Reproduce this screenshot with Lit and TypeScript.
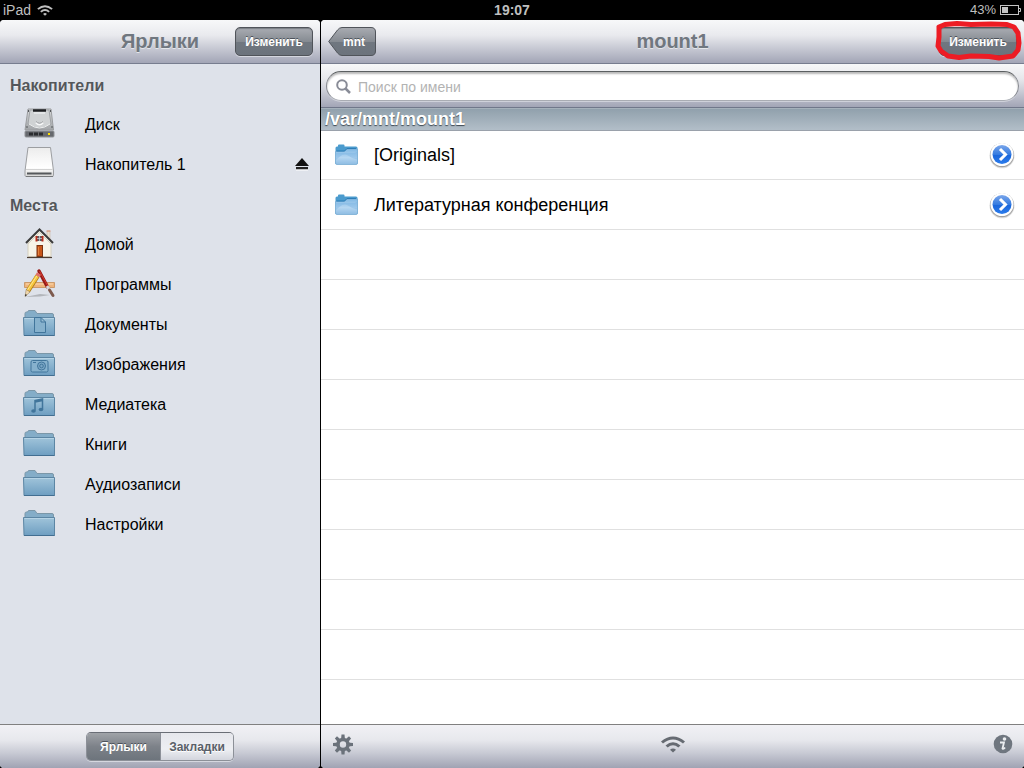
import { LitElement, html, svg, css } from "lit";
import { customElement, state } from "lit/decorators.js";

const folderShape = svg`
  <path d="M3 9V5.500Q3 4 4.500 4H5.500L6.500 2.500H13L15 5.500H30Q31.500 5.500 31.500 7V10H3Z" fill="#84adc8" stroke="#7b97a8"/>
  <path d="M1.500 9.500H32.500V27.500H2Z" fill="url(#fold)" stroke="#5c86a4"/>
  <path d="M2.500 10.500H32" stroke="#b5d3e5"/>
  <path d="M2 27.500H32.500" stroke="#426e91"/>`;

const glyphs: Record<string, unknown> = {
  disk: svg`<g transform="translate(0 -2)">
    <path d="M6 3H29L31.500 24H3Z" fill="url(#metal)" stroke="#9a9c9f"/>
    <path d="M8 4H27L29 18Q17.500 26 6 18Z" fill="#cfd2d3" stroke="#a0a3a6"/>
    <path d="M11 4.500H24" stroke="#1d1e20" stroke-width="2.500"/>
    <path d="M12 7H23" stroke="#e9ebec" stroke-width="1.500"/>
    <path d="M7 18Q17.500 26 28 18" fill="none" stroke="#eef0f0"/>
    <path d="M14 16.500Q17.500 20.500 21 16.500" fill="none" stroke="#f7f8f8" stroke-width="2"/>
    <path d="M14 15.500Q17.500 19 21 15.500" fill="none" stroke="#9a9da0"/>
    <path d="M6 5h1M28 5h1M4.500 21h1M29.500 21h1" stroke="#55585c" stroke-width="2"/>
    <rect x="3" y="25" width="29" height="6" rx="1" fill="#66696e" stroke="#909397"/>
    <path d="M7 28H22" stroke="#2a2c30" stroke-width="3" stroke-dasharray="4 1"/>
    <rect x="26" y="27" width="2" height="2" fill="#ffe100"/>
  </g>`,
  removable: svg`<g transform="translate(0 -2)">
    <path d="M6 1.500H28.500L31.500 25V29.500Q31.500 30.500 30 30.500H4.500Q3 30.500 3 29.500V25Z" fill="url(#paper)" stroke="#9c9ea1"/>
    <path d="M4 23.500H30.500" stroke="#d2d2d2"/>
    <path d="M5 27.500H29.500" stroke="#55585b" stroke-width="2"/>
    <path d="M4 30.500H31" stroke="#77797b"/>
  </g>`,
  home: svg`<g transform="translate(0 -1)">
    <path d="M25 4h3v9h-3z" fill="#e9dccb" stroke="#c9b8a4" stroke-width=".6"/>
    <path d="M24.500 4h4" stroke="#d98a6c"/>
    <path d="M6 14L17.500 3L29 14V29.500H6Z" fill="#f7f4e8" stroke="#d5cfbe"/>
    <path d="M4 16L17.500 2.500L31 16" fill="none" stroke="#3b3b3b" stroke-width="2"/>
    <path d="M6 17L17.500 5.500L29 17" fill="none" stroke="#cfcaba" stroke-width=".8"/>
    <rect x="14.500" y="9" width="6" height="5" fill="#5b5e66"/>
    <path d="M14.500 9v5.500M20.500 9v5.500" stroke="#b82c1a" stroke-width="2"/>
    <path d="M17.500 9v5M15 11.500h5" stroke="#d8d8d8" stroke-width=".7"/>
    <rect x="15" y="18.500" width="5.500" height="11" fill="#c85618" stroke="#7b3310"/>
    <path d="M16.500 20v8" stroke="#e4823d"/>
    <path d="M5 30.500H30" stroke="#4b3d32" stroke-width="1.200"/>
  </g>`,
  apps: svg`<g transform="translate(0 -1)">
    <path d="M3 30L18 27L28 28L18 29.500Z" fill="#b3b6bb"/>
    <path d="M2.500 15.500H32.500V20.500H2.500Z" fill="#efb57c" stroke="#c48d58" stroke-width=".8"/>
    <path d="M4 17H31" stroke="#fbd9b0"/>
    <path d="M17 4L25.500 20" stroke="#951a17" stroke-width="3.500" stroke-linecap="round"/>
    <path d="M17.500 4L25.500 18.500" stroke="#d63a2e" stroke-width="1"/>
    <path d="M25 19L28 23.500" stroke="#d5d6d8" stroke-width="3"/>
    <path d="M27.500 23L31 28.500" stroke="#7d5a4d" stroke-width="3" stroke-linecap="round"/>
    <path d="M15.500 9L6 24" stroke="#a87719" stroke-width="4.600"/>
    <path d="M15.300 9L6 23.500" stroke="#f6c53c" stroke-width="3.400"/>
    <path d="M14.800 9L5.500 23" stroke="#fde58e"/>
    <path d="M17 6.500L15.500 9" stroke="#df6f69" stroke-width="4.600"/>
    <path d="M4.200 22.500L8 25L3 29.500Z" fill="#f0d8af" stroke="#8e7448" stroke-width=".5"/>
    <path d="M3 29.500L3.500 27L5 28Z" fill="#222"/>
  </g>`,
  documents: svg`${folderShape}
    <path d="M12.500 9.500H19L23.500 14V24.500H12.500Z M19 9.500V14H23.500" fill="#86b1cd" stroke="#41759b"/>`,
  pictures: svg`${folderShape}
    <rect x="9" y="12.500" width="17" height="11.500" rx="1.500" fill="#86b1cd" stroke="#41759b"/>
    <circle cx="19.500" cy="18" r="4" fill="#79a6c5" stroke="#41759b"/>
    <circle cx="19.500" cy="18" r="1.800" fill="none" stroke="#41759b"/>
    <path d="M11 14.500h3" stroke="#41759b"/>`,
  media: svg`${folderShape}
    <path d="M13 22.500V12.500L20.500 11V21M13 14L20.500 12.500" fill="none" stroke="#41759b" stroke-width="1.500"/>
    <ellipse cx="11.500" cy="23" rx="2.300" ry="1.800" fill="#41759b"/>
    <ellipse cx="19" cy="21.500" rx="2.300" ry="1.800" fill="#41759b"/>`,
  folder: folderShape,
};

interface Place {
  name: string;
  icon: string;
  ejectable?: boolean;
}

interface Group {
  title: string;
  places: Place[];
}

const groups: Group[] = [
  {
    title: "Накопители",
    places: [
      { name: "Диск", icon: "disk" },
      { name: "Накопитель 1", icon: "removable", ejectable: true },
    ],
  },
  {
    title: "Места",
    places: [
      { name: "Домой", icon: "home" },
      { name: "Программы", icon: "apps" },
      { name: "Документы", icon: "documents" },
      { name: "Изображения", icon: "pictures" },
      { name: "Медиатека", icon: "media" },
      { name: "Книги", icon: "folder" },
      { name: "Аудиозаписи", icon: "folder" },
      { name: "Настройки", icon: "folder" },
    ],
  },
];

const wifi = (size: number, color: string) => html`
  <svg width=${size} height=${Math.round(size * 0.7)} viewBox="0 0 24 17" fill=${color}>
    <path d="M0 5.500Q12-4.500 24 5.500L22 7.500Q12 -.5 2 7.500Z"/>
    <path d="M4.500 9.500Q12 3 19.500 9.500L17.300 11.500Q12 7 6.700 11.500Z"/>
    <path d="M9 13.800Q12 11.300 15 13.800L12 16.500Z"/>
  </svg>`;

const chrome = css`
  :host {
    font-family: "Liberation Sans", Arial, sans-serif;
  }
  * {
    box-sizing: border-box;
  }
  button {
    font: inherit;
    cursor: pointer;
  }
  ul {
    list-style: none;
    margin: 0;
    padding: 0;
  }
  svg {
    display: block;
    flex: none;
  }
  .bar {
    flex: none;
    height: 44px;
    padding: 0 7px;
  }
  .top {
    display: grid;
    grid-template-columns: 1fr auto 1fr;
    align-items: center;
    background: linear-gradient(#f7f8f9, #e9eaee 35%, #c8cad4 65%, #a2a5b6);
    border-bottom: 1px solid #777d8f;
  }
  .bottom {
    background: linear-gradient(#f1f1f5, #e7e8ed 35%, #c8cad4 65%, #a0a3b3);
    border-top: 1px solid #808080;
  }
  h1 {
    grid-column: 2;
    margin: 0;
    padding-bottom: 2px;
    font-size: 20px;
    line-height: 24px;
    color: #70777f;
    text-shadow: 0 1px 0 #e4e6ea;
  }
  .action {
    grid-column: 3;
    justify-self: end;
    width: 78px;
    height: 29px;
    padding: 0;
    border: 1px solid #50545a;
    border-radius: 5px;
    background: linear-gradient(#a9acb2, #868b92 50%, #707780 52%, #6c737c);
    box-shadow: 0 1px 0 #d5d7df, inset 0 1px 1px #7b7f86;
    color: #fff;
    font-size: 12px;
    font-weight: bold;
    text-shadow: 0 -1px 0 #4c525a;
  }
`;

@customElement("places-pane")
export class PlacesPane extends LitElement {
  @state() private tab = "Ярлыки";

  static styles = [
    chrome,
    css`
      :host {
        display: flex;
        flex-direction: column;
        overflow: hidden;
        border-radius: 4px;
        background: #dee2ea;
      }
      .scroll {
        flex: 1;
        min-height: 0;
        padding-top: 1px;
        overflow: auto;
        scrollbar-width: none;
      }
      h2 {
        margin: 0;
        padding: 2px 10px 0;
        font-size: 16px;
        line-height: 38px;
        color: #54575b;
        text-shadow: 0 1px 0 #f2f4f7;
      }
      .place {
        display: flex;
        align-items: center;
        height: 40px;
        padding: 0 10px 0 22px;
        font-size: 16px;
      }
      .name {
        flex: 1;
        display: flex;
        align-items: center;
        gap: 28px;
        padding: 0;
        border: 0;
        background: none;
        text-align: left;
        color: #000;
      }
      .eject {
        display: flex;
        padding: 0;
        border: 0;
        background: none;
      }
      .bottom {
        display: flex;
        align-items: center;
        justify-content: center;
      }
      .tabs {
        display: flex;
        height: 29px;
        border: 1px solid #8c9098;
        border-top-color: #6a6e76;
        border-radius: 5px;
        overflow: hidden;
        box-shadow: 0 1px 0 #d5d7df;
      }
      .tab {
        width: 73px;
        padding: 0;
        border: 0;
        background: linear-gradient(#e6e7ec, #eeeff3 60%, #d3d5dd);
        color: #5a6068;
        font-size: 12px;
        font-weight: bold;
        text-shadow: 0 1px 0 #fff;
      }
      .tab[aria-pressed="true"] {
        background: linear-gradient(#a0a3a8, #7d8289 50%, #6d747c);
        color: #fff;
        text-shadow: 0 -1px 0 #4c525a;
      }
      .tab + .tab {
        border-left: 1px solid #8c9098;
      }
    `,
  ];

  private renderPlace(place: Place) {
    return html`
      <li class="place">
        <button class="name">
          <svg width="35" height="34" viewBox="0 0 35 34" overflow="visible" aria-hidden="true">
            <defs>
              <linearGradient id="fold" x2="0" y2="1"><stop stop-color="#a0c4da"/><stop offset="1" stop-color="#6e9ec1"/></linearGradient>
              <linearGradient id="metal" x2="0" y2="1"><stop stop-color="#d9dbdc"/><stop offset="1" stop-color="#a2a5a8"/></linearGradient>
              <linearGradient id="paper" x2="0" y2="1"><stop stop-color="#ececec"/><stop offset=".7" stop-color="#fff"/><stop offset="1" stop-color="#d5d5d5"/></linearGradient>
            </defs>
            ${glyphs[place.icon]}
          </svg>
          ${place.name}
        </button>
        ${place.ejectable
          ? html`<button class="eject" aria-label="Извлечь">
              <svg width="16" height="14" viewBox="0 0 16 14">
                <path d="M8 0L15 8H1Z" fill="#111"/>
                <path d="M2 9H14V11.500H2Z" fill="#222"/>
                <path d="M2 12H14" stroke="#fff"/>
              </svg>
            </button>`
          : null}
      </li>`;
  }

  render() {
    return html`
      <header class="bar top">
        <h1>Ярлыки</h1>
        <button class="action">Изменить</button>
      </header>
      <nav class="scroll">
        ${groups.map(
          (group) => html`
            <h2>${group.title}</h2>
            <ul>${group.places.map((place) => this.renderPlace(place))}</ul>`
        )}
      </nav>
      <footer class="bar bottom">
        <div class="tabs">
          ${["Ярлыки", "Закладки"].map(
            (name) => html`<button
              class="tab"
              aria-pressed=${name === this.tab}
              @click=${() => (this.tab = name)}
            >${name}</button>`
          )}
        </div>
      </footer>`;
  }
}

@customElement("files-pane")
export class FilesPane extends LitElement {
  static styles = [
    chrome,
    css`
      :host {
        display: flex;
        flex-direction: column;
        min-width: 0;
        overflow: hidden;
        border-radius: 4px;
        background: #fff;
      }
      .back {
        display: grid;
        width: 48px;
        height: 29px;
        padding: 0;
        border: 0;
        background: none;
        color: #fff;
        font-size: 12px;
        font-weight: bold;
        text-shadow: 0 -1px 0 #4c525a;
      }
      .back > * {
        grid-area: 1 / 1;
      }
      .back span {
        align-self: center;
        padding-left: 4px;
      }
      .edit {
        grid-column: 3;
        justify-self: end;
        position: relative;
        display: flex;
        width: 78px;
      }
      .mark {
        position: absolute;
        left: -6px;
        top: -8px;
        pointer-events: none;
      }
      .search {
        flex: none;
        height: 44px;
        padding: 7px 5px 0;
        background: linear-gradient(#f7f8f9, #e6e7eb 35%, #c8cad4 65%, #a2a5b6);
        border-bottom: 1px solid #70778a;
      }
      .field {
        display: flex;
        align-items: center;
        gap: 7px;
        height: 30px;
        padding: 0 9px;
        border: 1px solid #85888f;
        border-top-color: #5b5f61;
        border-bottom-color: #a9acb3;
        border-radius: 15px;
        background: #fff;
        box-shadow: inset 0 2px 2px #b9b9b9, 0 1px 0 #cfd1da;
      }
      .field input {
        flex: 1;
        min-width: 0;
        padding: 2px 0 0;
        border: 0;
        outline: 0;
        background: none;
        font: inherit;
        font-size: 14px;
      }
      .field input::placeholder {
        color: #b3b3b3;
        opacity: 1;
      }
      h2 {
        flex: none;
        margin: 0;
        padding: 1px 4px 0;
        background: linear-gradient(#8f9fab, #b2bec8);
        box-shadow: inset 0 1px 0 #a5b1bb;
        color: #fff;
        font-size: 18px;
        line-height: 21px;
        text-shadow: 0 1px 1px #3f4a54;
      }
      .list {
        flex: 1;
        min-height: 0;
        overflow: hidden;
        background: repeating-linear-gradient(#fff 0 49px, #e0e0e0 49px 50px);
        box-shadow: inset 0 1px 0 #9aa1ab;
      }
      .file {
        display: flex;
        align-items: center;
        height: 50px;
        padding: 0 8px 0 13px;
        font-size: 18px;
      }
      .file a {
        flex: 1;
        display: flex;
        align-items: center;
        gap: 14px;
        color: #000;
        text-decoration: none;
      }
      .more {
        padding: 0;
        border: 0;
        background: none;
      }
      .bottom {
        display: grid;
        grid-template-columns: 1fr auto 1fr;
        align-items: center;
        padding: 0 10px;
      }
      .tool {
        padding: 0 0 5px;
        border: 0;
        background: none;
      }
      .tool:first-child {
        justify-self: start;
      }
      .tool:last-child {
        justify-self: end;
      }
    `,
  ];

  private renderFile(name: string) {
    return html`
      <li class="file">
        <a href="#">
          <svg width="26" height="24" viewBox="0 0 26 24" aria-hidden="true">
            <defs>
              <linearGradient id="front" x2="0" y2="1"><stop stop-color="#82b9e4"/><stop offset=".55" stop-color="#b5d6f1"/><stop offset="1" stop-color="#8dbce3"/></linearGradient>
            </defs>
            <path d="M1.500 21V5Q1.500 3.500 3 3.500H4V2.500Q4 1.500 5 1.500H9.500Q10.500 1.500 10.500 2.500V3.500H22Q23.500 3.500 23.500 5V21Z" fill="#4b9bce"/>
            <path d="M1.500 8.500H10.500L13 6H23.500V20Q23.500 21.500 22 21.500H3Q1.500 21.500 1.500 20Z" fill="url(#front)" stroke="#78add4" stroke-width=".8"/>
            <path d="M2 17Q9 9 14 12.500Q18 15.500 23 16.500V8.500L21 10H2Z" fill="#6eace0" opacity=".35"/>
            <path d="M2.500 8H10.500L13 5.500H22" fill="none" stroke="#2d7db7"/>
          </svg>
          ${name}
        </a>
        <button class="more" aria-label="Подробнее">
          <svg width="28" height="28" viewBox="0 0 28 28">
            <defs>
              <linearGradient id="ball" x2="0" y2="1"><stop stop-color="#7ba6ea"/><stop offset=".5" stop-color="#357be0"/><stop offset=".52" stop-color="#1b66da"/><stop offset="1" stop-color="#2b7cec"/></linearGradient>
            </defs>
            <circle cx="14" cy="14.800" r="12.500" fill="#c7c7c7" opacity=".6"/>
            <circle cx="14" cy="14.200" r="12" fill="#8c8c8c" opacity=".75"/>
            <circle cx="14" cy="13.500" r="11.500" fill="#fff"/>
            <circle cx="14" cy="13.500" r="9.500" fill="url(#ball)"/>
            <path d="M12 8L17.500 13.500L12 19" fill="none" stroke="#fff" stroke-width="3"/>
          </svg>
        </button>
      </li>`;
  }

  render() {
    const teeth = [0, 45, 90, 135, 180, 225, 270, 315];
    return html`
      <header class="bar top">
        <button class="back">
          <svg width="48" height="29" viewBox="0 0 48 29" aria-hidden="true">
            <defs>
              <linearGradient id="steel" x2="0" y2="1"><stop stop-color="#a9acb2"/><stop offset=".5" stop-color="#868b92"/><stop offset=".52" stop-color="#707780"/><stop offset="1" stop-color="#6c737c"/></linearGradient>
            </defs>
            <path d="M.7 14.500L9.500 3Q11.500.5 14 .5H43Q47.500.5 47.500 5V24Q47.500 28.500 43 28.500H14Q11.500 28.500 9.500 26Z" fill="url(#steel)" stroke="#50545a"/>
          </svg>
          <span>mnt</span>
        </button>
        <h1>mount1</h1>
        <div class="edit">
          <button class="action">Изменить</button>
          <svg class="mark" width="92" height="44" viewBox="0 0 92 44" fill="none" stroke="#ed1c24" stroke-linejoin="round" stroke-linecap="round" aria-hidden="true">
            <path d="M6 8L12 5.500L24 4.500L38 5.500L58 5L74 5.500L81 8L85 14L86 24L85 31L80 37L66 39L56 37.500L38 37L26 38.500L15 37L8 32L5 27L6 18L6 8" stroke-width="5"/>
          </svg>
        </div>
      </header>
      <div class="search">
        <label class="field">
          <svg width="15" height="15" viewBox="0 0 15 15" fill="none" stroke="#898c97">
            <circle cx="6" cy="6" r="4.800" stroke-width="2"/>
            <path d="M9.500 9.500L14 14" stroke-width="2.500"/>
          </svg>
          <input type="search" placeholder="Поиск по имени" aria-label="Поиск по имени" />
        </label>
      </div>
      <h2>/var/mnt/mount1</h2>
      <ul class="list">
        ${["[Originals]", "Литературная конференция"].map((name) => this.renderFile(name))}
      </ul>
      <footer class="bar bottom">
        <button class="tool" aria-label="Настройки">
          <svg width="24" height="22" viewBox="0 0 24 22">
            ${teeth.map((a) => svg`<path d="M10.500 1.500H13.500L14 7H10Z" fill="#6b727b" transform="rotate(${a} 12 11.500)"/>`)}
            <circle cx="12" cy="11.500" r="5" fill="none" stroke="#6b727b" stroke-width="3.600"/>
          </svg>
        </button>
        <button class="tool" aria-label="Wi-Fi">${wifi(24, "#666b72")}</button>
        <button class="tool" aria-label="Информация">
          <svg width="22" height="22" viewBox="0 0 22 22">
            <circle cx="11" cy="11" r="9.300" fill="#6f767f"/>
            <circle cx="12.500" cy="6" r="1.800" fill="#eceef1"/>
            <path d="M8 9.500H12L10.500 15.500Q11.500 16.500 13 14.500" fill="none" stroke="#eceef1" stroke-width="1.800"/>
          </svg>
        </button>
      </footer>`;
  }
}

@customElement("app-root")
export class AppRoot extends LitElement {
  static styles = [
    chrome,
    css`
      :host {
        display: flex;
        flex-direction: column;
        height: 100vh;
        background: #000;
      }
      .status {
        flex: none;
        display: grid;
        grid-template-columns: 1fr auto 1fr;
        align-items: center;
        height: 20px;
        padding: 0 3px;
        color: #bfbfbf;
        font-size: 14px;
        line-height: 18px;
      }
      .left,
      .right {
        display: flex;
        align-items: center;
        gap: 6px;
      }
      .right {
        justify-content: flex-end;
        gap: 4px;
        font-size: 13px;
      }
      .time {
        font-weight: bold;
      }
      .panes {
        flex: 1;
        min-height: 0;
        display: grid;
        grid-template-columns: 320px minmax(0, 1fr);
        grid-template-rows: minmax(0, 1fr);
        gap: 1px;
      }
    `,
  ];

  render() {
    return html`
      <div class="status">
        <div class="left"><span>iPad</span>${wifi(16, "#bfbfbf")}</div>
        <span class="time">19:07</span>
        <div class="right">
          <span>43%</span>
          <svg width="21" height="10" viewBox="0 0 21 10" aria-hidden="true">
            <rect x=".5" y=".5" width="18" height="9" fill="none" stroke="#c4c4c4"/>
            <rect x="2" y="2" width="6" height="6" fill="#c4c4c4"/>
            <path d="M19 3.500h1.500v3H19" fill="none" stroke="#c4c4c4"/>
          </svg>
        </div>
      </div>
      <main class="panes">
        <places-pane></places-pane>
        <files-pane></files-pane>
      </main>`;
  }
}
